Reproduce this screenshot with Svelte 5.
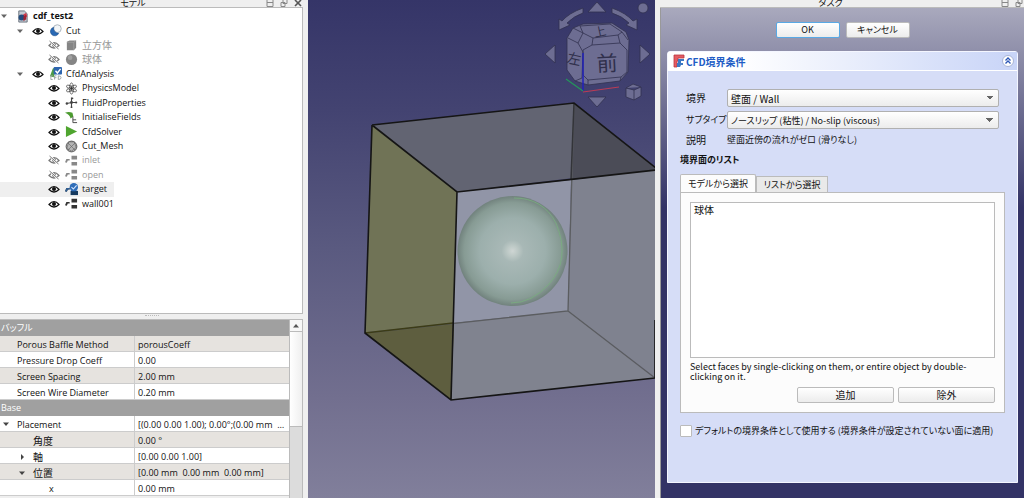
<script>
  let subtype = 'noslip';
  let boundary = 'wall';
  let useDefault = false;
  let activeTab = 'model';

  const treeItems = [
    { name: 'cdf_test2', level: 0, icon: 'doc', open: true, bold: true },
    { name: 'Cut', level: 1, icon: 'cut', open: true, visible: true },
    { name: '立方体', level: 2, icon: 'cube', cjk: true },
    { name: '球体', level: 2, icon: 'ball', cjk: true },
    { name: 'CfdAnalysis', level: 1, icon: 'cfd', open: true, visible: true },
    { name: 'PhysicsModel', level: 2, icon: 'atom', visible: true },
    { name: 'FluidProperties', level: 2, icon: 'fluid', visible: true },
    { name: 'InitialiseFields', level: 2, icon: 'init', visible: true },
    { name: 'CfdSolver', level: 2, icon: 'solver', visible: true },
    { name: 'Cut_Mesh', level: 2, icon: 'mesh', visible: true },
    { name: 'inlet', level: 2, icon: 'bound' },
    { name: 'open', level: 2, icon: 'bound' },
    { name: 'target', level: 2, icon: 'target', visible: true, selected: true },
    { name: 'wall001', level: 2, icon: 'bound', visible: true },
  ];

  const properties = [
    { group: 'バッフル' },
    { name: 'Porous Baffle Method', value: 'porousCoeff', shade: true },
    { name: 'Pressure Drop Coeff', value: '0.00' },
    { name: 'Screen Spacing', value: '2.00 mm', shade: true },
    { name: 'Screen Wire Diameter', value: '0.20 mm' },
    { group: 'Base' },
    { name: 'Placement', value: '[(0.00 0.00 1.00); 0.00°;(0.00 mm  0...', arrow: 'down' },
    { name: '角度', value: '0.00 °', level: 1, cjk: true, shade: true },
    { name: '軸', value: '[0.00 0.00 1.00]', level: 1, cjk: true, arrow: 'right' },
    { name: '位置', value: '[0.00 mm  0.00 mm  0.00 mm]', level: 1, cjk: true, arrow: 'down', shade: true },
    { name: 'x', value: '0.00 mm', level: 2 },
  ];
</script>

{#snippet dockButtons(closable)}
  <span class="dock-buttons">
    <button aria-label="Minimize"><svg viewBox="0 0 8 8"><path d="M1 -1.500h6v8H1zM1 2.500h6" fill="none" stroke="#888" /></svg></button>
    <button aria-label="Float"><svg viewBox="0 0 8 8"><path d="M3 -0.500h4v4H3zM1 2.500h4v4H1z" fill="#efefef" stroke="#888" /></svg></button>
    {#if closable}
      <button aria-label="Close"><svg viewBox="0 0 8 8"><path d="M1 0l6 6M7 0L1 6" fill="none" stroke="#555" stroke-width="1.6" /></svg></button>
    {/if}
  </span>
{/snippet}

{#snippet treeIcon(name)}
  <svg class="icon" viewBox="0 0 14 14">
    {#if name === 'doc'}
      <path d="M3 1h6l3 3v9H3z" fill="#c4cbd3" stroke="#68717c" />
      <path d="M6 6l5-3 1 4-4 3z" fill="#d23a4b" />
      <circle cx="6" cy="8" r="3.2" fill="#244c7d" />
      <path d="M8 7l3-2v5l-3 2z" fill="#9f2435" />
    {:else if name === 'cut'}
      <circle cx="9" cy="5" r="4.2" fill="#f3f6f8" stroke="#a9b2bb" />
      <path d="M5 3.500a4.700 4.700 0 1 0 5.500 6.500A5.500 5.500 0 0 1 5 3.500z" fill="#2868b4" stroke="#184a86" stroke-width=".6" />
    {:else if name === 'cube'}
      <path d="M2 3l3-1.500h7v8l-2.500 2.500H2z" fill="#858585" />
      <path d="M2 3.500h7.500V12M9.500 3.500L12 1.500" fill="none" stroke="#aaa" stroke-width=".7" />
    {:else if name === 'ball'}
      <circle cx="7" cy="7" r="6" fill="#858585" />
      <circle cx="5.500" cy="5" r="2.500" fill="#a0a0a0" />
    {:else if name === 'cfd'}
      <path d="M1 10L4 2q.3-1 2-1h3L7 4l-2 7z" fill="#4c9b45" />
      <rect x="5" y="0" width="9" height="8" rx="1" fill="#2e65ae" />
      <path d="M7 4l2 2.500L12.500 2" fill="none" stroke="#fff" stroke-width="1.500" />
      <path d="M4 9.500H2v4h2M6 13.500v-4h2M6 11.500h2M10 9.500v4q3 0 3-2t-3-2" fill="none" stroke="#9aa3a3" />
    {:else if name === 'atom'}
      <g fill="none" stroke="#555" stroke-width=".9">
        <ellipse cx="7" cy="7" rx="2.200" ry="6" />
        <ellipse cx="7" cy="7" rx="2.200" ry="6" transform="rotate(60 7 7)" />
        <ellipse cx="7" cy="7" rx="2.200" ry="6" transform="rotate(120 7 7)" />
      </g>
      <circle cx="7" cy="7" r="1.500" fill="#333" />
    {:else if name === 'fluid'}
      <path d="M2 8l5-1h5M7 1.500V12" fill="none" stroke="#444" stroke-width="1.200" />
      <circle cx="7" cy="7" r="1.600" fill="#444" />
      <circle cx="2" cy="8" r="1.300" fill="#444" />
      <circle cx="12" cy="7" r="1.200" fill="#444" />
      <circle cx="8" cy="2.500" r="1" fill="#444" />
      <circle cx="7" cy="12" r="1" fill="#444" />
    {:else if name === 'init'}
      <path d="M0 2q4-2 8 0l1 4-3 2Q5 4 0 2z" fill="#4c9b30" />
      <path d="M8.500 6v6.500H13M8.500 9.500H12" fill="none" stroke="#444" />
    {:else if name === 'solver'}
      <path d="M1 1l12 6-12 6z" fill="#4fa52f" />
    {:else if name === 'mesh'}
      <circle cx="7" cy="7" r="5.800" fill="#b5b5b5" stroke="#555" />
      <path d="M3 3l8 8M11 3l-8 8M4 2l-2 7 5 3 5-4-2-6z" fill="none" stroke="#666" stroke-width=".7" />
    {:else}
      <path d="M7 2h6v4H7zM7 8.500h6v4H7z" />
      <path d="M0 9l1.500-3.500H5V7H3L2 9.500z" />
      {#if name === 'target'}
        <path d="M0 9l1.500-3.500H5V7H3L2 9.500z" fill="#2f5f95" />
        <rect x="6" y="8.500" width="8" height="4.500" fill="#173b60" />
        <circle cx="9.500" cy="4.500" r="4.500" fill="#2f6db8" />
        <path d="M7 4.500l2 2 3.500-4" fill="none" stroke="#d8e8ff" stroke-width="1.200" />
      {/if}
    {/if}
  </svg>
{/snippet}

<main class="workbench">
  <section class="model">
    <header class="dock-title"><h2>モデル</h2>{@render dockButtons(true)}</header>

    <ul class="tree">
      {#each treeItems as item}
        <li class="level-{item.level}" class:bold={item.bold} class:selected={item.selected} class:hidden-item={item.level > 0 && !item.visible}>
          <span class="twist">{#if item.open}<svg viewBox="0 0 8 8"><path d="M1 2.500h6L4 6z" fill="#666" /></svg>{/if}</span>
          {#if item.level > 0}
            <svg class="eye" viewBox="0 0 12 10">
              <path d="M1 5.500q5-6 10 0q-5 5-10 0z" fill="none" stroke="currentColor" stroke-width="1.200" />
              <circle cx="6" cy="5" r="2" fill="currentColor" />
              {#if !item.visible}<path d="M2 1l8 8" stroke="#fff" stroke-width="2" /><path d="M1.500 1l9 8" stroke="currentColor" />{/if}
            </svg>
          {/if}
          {@render treeIcon(item.icon)}
          <span class:kanji={item.cjk}>{item.name}</span>
        </li>
      {/each}
    </ul>

    <div class="grip"></div>

    <div class="properties">
      <div class="table-wrap">
        <table>
          <colgroup><col class="col-name" /><col /></colgroup>
          <tbody>
            {#each properties as row}
              {#if row.group}
                <tr><th colspan="2">{row.group}</th></tr>
              {:else}
                <tr class:shade={row.shade}>
                  <td class="name indent-{row.level || 0}" class:kanji={row.cjk}>
                    <span class="twist">{#if row.arrow}<svg viewBox="0 0 8 8"><path d={row.arrow === 'down' ? 'M1 2.500h6L4 6z' : 'M3 1v6l3-3z'} fill="#444" /></svg>{/if}</span>{row.name}
                  </td>
                  <td class="value">{row.value}</td>
                </tr>
              {/if}
            {/each}
          </tbody>
        </table>
      </div>
      <div class="scrollbar">
        <button aria-label="Scroll up"><svg viewBox="0 0 8 8"><path d="M1 5.500h6L4 2z" fill="#555" /></svg></button>
        <div class="thumb"></div>
      </div>
    </div>
  </section>

  <section class="view" aria-label="3D view">
    <svg viewBox="308 0 347 498" preserveAspectRatio="xMidYMid slice">
      <defs>
        <linearGradient id="sky" x1="0" y1="0" x2="0" y2="1">
          <stop offset="0" stop-color="#353568" />
          <stop offset=".22" stop-color="#434371" />
          <stop offset=".5" stop-color="#5a5a80" />
          <stop offset=".8" stop-color="#726f8f" />
          <stop offset="1" stop-color="#817f9b" />
        </linearGradient>
        <radialGradient id="sphere">
          <stop offset="0" stop-color="#cfd6d4" />
          <stop offset=".1" stop-color="#bcc8c5" />
          <stop offset=".2" stop-color="#a8b8b6" />
          <stop offset=".6" stop-color="#9cafac" />
          <stop offset=".88" stop-color="#879b94" />
          <stop offset="1" stop-color="#71827d" />
        </radialGradient>
      </defs>
      <rect x="-692" width="2347" height="498" fill="url(#sky)" />

      <!-- box faces -->
      <path d="M372 125L574 103 656 168 457 192z" fill="#626472" />
      <path d="M574 103L656 168V170L572 180z" fill="#4b4c57" />
      <path d="M457 192L571 180 568 311 453 323z" fill="#9195a7" />
      <path d="M571 180L656 170V378L568 311z" fill="#7f828f" />
      <path d="M453 323L568 311 655 378 451 400z" fill="#80838f" />
      <path d="M372 125L457 192 453 323 365 333z" fill="#707356" />
      <path d="M365 333L454 323 451 400z" fill="#5e5e3f" />
      <circle cx="512.500" cy="251" r="55" fill="url(#sphere)" />
      <path d="M514 198q29 0 42 25 15 37-7 61-17 19-38 19" fill="none" stroke="#78ae7d" stroke-width=".8" />
      <path d="M574 103L568 311 365 333M568 311L655 378" fill="none" stroke="#5b5d60" stroke-width="1.300" />
      <path d="M574 103L571 180" stroke="#333439" stroke-width="1.500" />
      <path d="M365 333L453 323" stroke="#3c3c17" stroke-width="1.300" />
      <path d="M372 125L574 103 656 168M372 125L457 192 656 170M372 125L365 333 451 400 655 378M457 192L451 400M655 320V378" fill="none" stroke="#151515" stroke-width="1.600" />

      <!-- navigation cube -->
      <g fill="#6d6d92" stroke="#31314f" stroke-width=".8">
        <path d="M597 2l9 10h-18zM597 107l9-10h-18zM545 54l10-9v18zM650 54l-10-9v18z" />
        <path d="M583 8q-14 5-21 13l-3-2v11l11-5-3-2q7-7 16-10zM612 8q14 5 21 13l4-2v11l-11-5 3-2q-7-7-17-10z" />
        <circle cx="643" cy="8" r="5" />
        <path d="M626 88l7-4 8 3v9l-7 4-8-3zM626 88l8 2 7-3M634 90v10" />
        <path d="M567 38L573 28 583 24 612 23 626 32 629 40 628 72 620 81 588 85 575 81 567 70z" />
        <g fill="none">
          <path d="M583 50L592 45 620 43 627 50 627 72 621 77 588 80 583 75z" />
          <path d="M568 38L578 43 583 52 582 78 575 81" />
          <path d="M580 26L610 24 622 32 618 35 593 38 583 33z" />
          <path d="M593 38L592 45M618 35L620 43M583 33L578 43M622 32L628 40M583 33L573 28M621 77L620 81M588 80V85" />
        </g>
      </g>
      <g class="cube-text">
        <text x="607" y="71" font-size="21" transform="rotate(-3 607 64)">前</text>
        <text x="574" y="64" font-size="14" transform="rotate(12 574 60)">左</text>
        <text x="600" y="36" font-size="12" transform="rotate(-12 600 32)">上</text>
      </g>
      <path d="M583 53v38" stroke="#2222bb" stroke-width="1.500" />
      <path d="M583 91L566 79" stroke="#24965a" stroke-width="1.200" />
      <path d="M583 92l36-5" stroke="#bb3c55" stroke-width="1.200" />
    </svg>
  </section>

  <section class="tasks">
    <header class="dock-title"><h2>タスク</h2>{@render dockButtons(false)}</header>
    <div class="task-body">
      <div class="actions">
        <button class="btn primary">OK</button>
        <button class="btn">キャンセル</button>
      </div>

      <div class="task-box">
        <header class="box-title">
          <svg class="logo" viewBox="0 0 12 14">
            <path d="M1 1h10v3H5v3H4v6H1z" fill="#e45c63" stroke="#b9363f" stroke-width=".8" />
            <path d="M5 5h6v2H8v2h2v2H8l-1 2H4V9h1z" fill="#3c78c3" />
          </svg>
          <h3 class="kanji">CFD境界条件</h3>
          <button class="collapse" aria-label="Collapse"><svg viewBox="0 0 12 12"><circle cx="6" cy="6" r="5.500" fill="#fff" stroke="#a9b4d5" /><path d="M3.500 5.500L6 3l2.500 2.500M3.500 8.500L6 6l2.500 2.500" fill="none" stroke="#2a55b5" stroke-width="1.300" /></svg></button>
        </header>

        <div class="box-content">
          <div class="form">
            <label for="boundary" class="kanji">境界</label>
            <select id="boundary" class="kanji" bind:value={boundary}>
              <option value="wall">壁面 / Wall</option>
            </select>
            <label for="subtype">サブタイプ</label>
            <select id="subtype" bind:value={subtype}>
              <option value="noslip">ノースリップ (粘性) / No-slip (viscous)</option>
            </select>
            <span class="kanji">説明</span>
            <span>壁面近傍の流れがゼロ (滑りなし)</span>
          </div>

          <h4>境界面のリスト</h4>

          <div class="tabs" role="tablist">
            <button role="tab" aria-selected={activeTab === 'model'} class:active={activeTab === 'model'} on:click={() => { activeTab = 'model'; }}>モデルから選択</button>
            <button role="tab" aria-selected={activeTab === 'list'} class:active={activeTab === 'list'} on:click={() => { activeTab = 'list'; }}>リストから選択</button>
          </div>
          <div class="tab-panel">
            <ul class="faces kanji"><li>球体</li></ul>
            <p>Select faces by single-clicking on them, or entire object by double-clicking on it.</p>
            <div class="panel-actions">
              <button class="btn wide kanji">追加</button>
              <button class="btn wide kanji">除外</button>
            </div>
          </div>

          <label class="check"><input type="checkbox" bind:checked={useDefault} />デフォルトの境界条件として使用する (境界条件が設定されていない面に適用)</label>
        </div>
      </div>
    </div>
  </section>
</main>

<style>
  :global(body) {
    background: #efefef;
  }

  .workbench {
    display: grid;
    grid-template-columns: 308fr 347fr 369fr;
    height: 100vh;
    overflow: hidden;
    font-family: "Open Sans", "Noto Sans CJK JP", sans-serif;
    font-size: 9px;
    color: #111;
  }

  .workbench > section {
    min-width: 0;
    min-height: 0;
    overflow: hidden;
  }

  h2, h3, h4, p, ul {
    margin: 0;
    padding: 0;
    font-weight: normal;
    font-size: inherit;
  }

  ul {
    list-style: none;
  }

  button {
    font: inherit;
    font-feature-settings: inherit;
    color: inherit;
    padding: 0;
  }

  svg {
    display: block;
  }

  .dock-title {
    flex: none;
    display: flex;
    height: 8px;
    overflow: hidden;
    background: #efefef;
    border-bottom: 1px solid #bbb;
    box-sizing: border-box;
  }

  .dock-title h2 {
    flex: 1;
    text-align: center;
    line-height: 6px;
    font-family: "Noto Sans CJK JP", sans-serif;
    font-feature-settings: "palt";
  }

  .dock-buttons {
    display: flex;
    gap: 6px;
    padding-right: 1px;
  }

  .dock-buttons button {
    width: 8px;
    height: 8px;
    border: 0;
    background: none;
  }

  .model {
    display: flex;
    flex-direction: column;
    background: #efefef;
    padding-right: 5px;
  }

  .tree {
    flex: none;
    display: grid;
    grid-auto-rows: 1fr;
    box-sizing: border-box;
    height: 306px;
    padding: 1px 0 102px;
    background: #fff;
    border-right: 1px solid #bbb;
    border-bottom: 1px solid #bbb;
  }

  .tree li {
    display: flex;
    align-items: center;
    justify-self: start;
    padding-right: 7px;
    line-height: 14px;
  }

  .twist {
    flex: none;
    width: 16px;
  }

  .twist svg {
    width: 8px;
    height: 8px;
  }

  .tree .level-1 { padding-left: 16px; }
  .tree .level-2 { padding-left: 32px; }

  .tree .bold {
    font-weight: bold;
  }

  .tree .selected {
    background: #efefef;
  }

  .tree .hidden-item {
    color: #999;
  }

  .eye {
    width: 12px;
    height: 10px;
    margin-right: 5px;
    color: #111;
  }

  .hidden-item .eye {
    color: #777;
  }

  .icon {
    width: 13px;
    height: 13px;
    margin-right: 4px;
    fill: #333;
  }

  .hidden-item .icon {
    fill: #888;
  }

  .grip {
    width: 14px;
    height: 2px;
    margin: 1px auto 2px;
    border-top: 1px dotted #bbb;
    box-sizing: border-box;
  }

  .properties {
    flex: 1;
    min-height: 0;
    display: flex;
    overflow: hidden;
    border-top: 1px solid #bbb;
    border-right: 1px solid #bbb;
  }

  .table-wrap {
    flex: 1;
    min-width: 0;
  }

  table {
    width: 100%;
    table-layout: fixed;
    border-spacing: 0;
    background: #fff;
  }

  .col-name {
    width: 135px;
  }

  .shade {
    background: #e6e3df;
  }

  th {
    height: 16px;
    padding: 0 1px;
    background: #a0a0a0;
    color: #fff;
    text-align: left;
    font-weight: normal;
    line-height: 16px;
    font-feature-settings: "palt";
  }

  td {
    box-sizing: border-box;
    height: 16px;
    padding: 3px 0 0;
    line-height: 12px;
    white-space: pre;
    overflow: hidden;
    text-overflow: ellipsis;
    border-bottom: 1px solid #ccc;
  }

  .name {
    white-space: nowrap;
    border-right: 1px solid #ccc;
  }

  .name .twist {
    display: inline-block;
    padding-left: 2px;
    width: 15px;
  }

  .indent-1 { padding-left: 16px; }
  .indent-2 { padding-left: 32px; }

  .value {
    padding-left: 3px;
  }

  .kanji {
    font-size: 10px;
  }

  .scrollbar {
    flex: none;
    width: 13px;
    background: #dcdcdc;
    border-left: 1px solid #bbb;
    box-sizing: border-box;
  }

  .scrollbar button {
    display: grid;
    place-items: center;
    width: 100%;
    height: 12px;
    border: 0;
    border-bottom: 1px solid #bbb;
    background: #f7f7f7;
  }

  .scrollbar button svg {
    width: 8px;
    height: 8px;
  }

  .thumb {
    height: 94px;
    background: linear-gradient(to right, #fff, #efefef);
    border-bottom: 1px solid #bbb;
  }

  .view svg {
    width: 100%;
    height: 100%;
  }

  .cube-text {
    fill: #30304c;
    text-anchor: middle;
    font-family: "Noto Sans CJK JP", sans-serif;
  }

  .tasks {
    display: flex;
    flex-direction: column;
    padding-left: 5px;
    background: #efefef;
    font-family: "Noto Sans CJK JP", sans-serif;
    font-feature-settings: "palt";
  }

  .task-body {
    flex: 1;
    padding: 14px 6px 15px;
    background: linear-gradient(#a9a9bd, #333366 200px);
    border-left: 1px solid #999;
  }

  .actions {
    display: flex;
    justify-content: center;
    gap: 6px;
    margin-bottom: 13px;
  }

  .btn {
    width: 64px;
    height: 16px;
    line-height: 14px;
    border: 1px solid #bbb;
    border-radius: 2px;
    background: linear-gradient(#fff, #ececec);
  }

  .btn.primary {
    border-color: #58a9e5;
  }

  .task-box {
    border: 1px solid #f4f6ff;
    border-radius: 3px 3px 0 0;
    background: #d6ddf7;
  }

  .box-title {
    display: flex;
    align-items: center;
    height: 18px;
    padding: 0 3px 0 5px;
    background: linear-gradient(to right, #fff 20%, #c8d4f7);
    border-bottom: 1px solid #fff;
  }

  .logo {
    width: 12px;
    height: 14px;
  }

  .box-title h3 {
    flex: 1;
    margin-left: 1px;
    font-weight: bold;
    font-size: 10px;
    color: #215dc6;
  }

  .collapse {
    width: 12px;
    height: 12px;
    border: 0;
    background: none;
  }

  .box-content {
    padding: 18px 12px 44px;
  }

  .form {
    display: grid;
    grid-template-columns: 36px 1fr;
    column-gap: 5px;
    row-gap: 4px;
    align-items: center;
    padding: 0 6px;
    line-height: 14px;
    white-space: nowrap;
  }

  select {
    appearance: none;
    width: 100%;
    height: 18px;
    padding: 0 3px;
    font-family: inherit;
    font-size: 9px;
    font-feature-settings: inherit;
    color: inherit;
    border: 1px solid #b0b0b0;
    border-radius: 2px;
    background:
      linear-gradient(to bottom right, #666 50%, transparent 50%) right 4px center / 4px 4px no-repeat,
      linear-gradient(to bottom left, #666 50%, transparent 50%) right 8px center / 4px 4px no-repeat,
      linear-gradient(#fff, #ececec);
  }

  select.kanji {
    font-size: 10px;
  }

  h4 {
    margin: 6px 0 7px;
    font-weight: bold;
    line-height: 14px;
  }

  .tabs {
    display: flex;
    align-items: flex-end;
    height: 18px;
  }

  .tabs button {
    width: 72px;
    height: 16px;
    border: 1px solid #bbb;
    border-bottom: 0;
    background: #e9e9e9;
    white-space: nowrap;
  }

  .tabs .active {
    width: 76px;
    height: 18px;
    background: #fcfcfc;
    border-radius: 2px 2px 0 0;
  }

  .tab-panel {
    padding: 9px;
    background: #fcfcfc;
    border: 1px solid #bbb;
  }

  .faces {
    box-sizing: border-box;
    height: 156px;
    padding: 0 3px;
    line-height: 14px;
    background: #fff;
    border: 1px solid #bbb;
  }

  .tab-panel p {
    margin: 4px 0 5px;
    line-height: 10px;
  }

  .panel-actions {
    display: flex;
    justify-content: flex-end;
    gap: 4px;
  }

  .btn.wide {
    width: 97px;
  }

  .check {
    display: flex;
    align-items: center;
    margin-top: 11px;
    line-height: 14px;
    white-space: nowrap;
  }

  .check input {
    appearance: none;
    flex: none;
    width: 12px;
    height: 12px;
    margin: 0 3px 0 0;
    background: #fff;
    border: 1px solid #bbb;
    border-radius: 1px;
  }

  .check input:checked {
    background: #58a9e5;
  }
</style>
